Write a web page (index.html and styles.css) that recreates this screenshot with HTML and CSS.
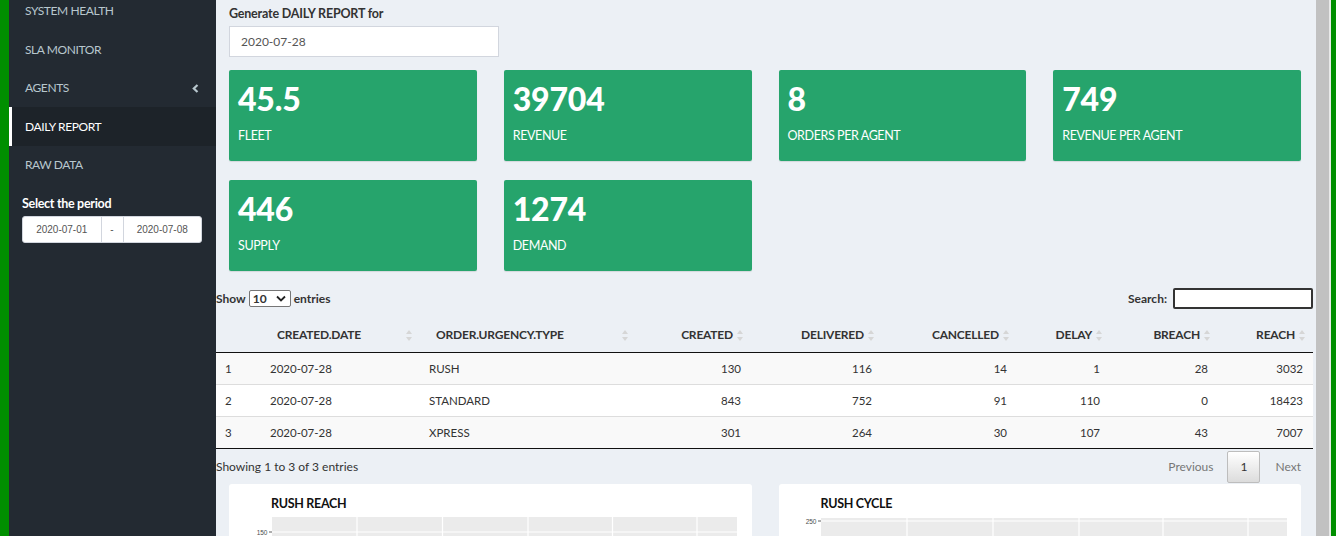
FILE: index.html
```html
<!DOCTYPE html>
<html>
<head>
<meta charset="utf-8">
<link rel="stylesheet" href="styles.css">
</head>
<body>
<div class="frame">
  <div class="edge-left"></div>
  <aside class="sidebar">
    <ul class="menu">
      <li class="item">SYSTEM HEALTH</li>
      <li class="item">SLA MONITOR</li>
      <li class="item has-sub">AGENTS
        <svg class="chev" width="7" height="9" viewBox="0 0 7 9"><polyline points="5.5,1 1.8,4.5 5.5,8" fill="none" stroke="#b8c7ce" stroke-width="2.2"/></svg>
      </li>
      <li class="item active">DAILY REPORT</li>
      <li class="item">RAW DATA</li>
    </ul>
    <div class="period">
      <div class="period-label">Select the period</div>
      <div class="range">
        <span class="range-date">2020-07-01</span>
        <span class="range-sep">-</span>
        <span class="range-date">2020-07-08</span>
      </div>
    </div>
  </aside>
  <main class="content">
    <div class="gen">
      <div class="gen-label">Generate DAILY REPORT for</div>
      <div class="gen-input">2020-07-28</div>
    </div>
    <div class="boxes">
      <div class="vbox"><div class="vnum">45.5</div><div class="vlab">FLEET</div></div>
      <div class="vbox"><div class="vnum">39704</div><div class="vlab">REVENUE</div></div>
      <div class="vbox"><div class="vnum">8</div><div class="vlab">ORDERS PER AGENT</div></div>
      <div class="vbox"><div class="vnum">749</div><div class="vlab">REVENUE PER AGENT</div></div>
      <div class="vbox"><div class="vnum">446</div><div class="vlab">SUPPLY</div></div>
      <div class="vbox"><div class="vnum">1274</div><div class="vlab">DEMAND</div></div>
    </div>
    <div class="dt">
      <div class="dt-top">
        <div class="dt-length">Show <span class="dt-select">10<svg width="10" height="7" viewBox="0 0 10 7"><polyline points="1,1.5 5,5.5 9,1.5" fill="none" stroke="#222" stroke-width="1.8"/></svg></span> entries</div>
        <div class="dt-search">Search: <span class="dt-search-input"></span></div>
      </div>
      <table class="dt-table">
        <colgroup>
          <col style="width:44px"><col style="width:159px"><col style="width:216px"><col style="width:116px"><col style="width:131px"><col style="width:135px"><col style="width:93px"><col style="width:108px"><col style="width:95px">
        </colgroup>
        <thead>
          <tr>
            <th class="idx"></th>
            <th class="sort">CREATED.DATE<span class="si"></span></th>
            <th class="sort">ORDER.URGENCY.TYPE<span class="si"></span></th>
            <th class="sort num">CREATED<span class="si"></span></th>
            <th class="sort num">DELIVERED<span class="si"></span></th>
            <th class="sort num">CANCELLED<span class="si"></span></th>
            <th class="sort num">DELAY<span class="si"></span></th>
            <th class="sort num">BREACH<span class="si"></span></th>
            <th class="sort num">REACH<span class="si"></span></th>
          </tr>
        </thead>
        <tbody>
          <tr class="odd"><td>1</td><td>2020-07-28</td><td>RUSH</td><td class="num">130</td><td class="num">116</td><td class="num">14</td><td class="num">1</td><td class="num">28</td><td class="num">3032</td></tr>
          <tr><td>2</td><td>2020-07-28</td><td>STANDARD</td><td class="num">843</td><td class="num">752</td><td class="num">91</td><td class="num">110</td><td class="num">0</td><td class="num">18423</td></tr>
          <tr class="odd"><td>3</td><td>2020-07-28</td><td>XPRESS</td><td class="num">301</td><td class="num">264</td><td class="num">30</td><td class="num">107</td><td class="num">43</td><td class="num">7007</td></tr>
        </tbody>
      </table>
      <div class="dt-bottom">
        <div class="dt-info">Showing 1 to 3 of 3 entries</div>
        <div class="dt-pages">
          <span class="pg-link">Previous</span>
          <span class="pg-btn">1</span>
          <span class="pg-link">Next</span>
        </div>
      </div>
    </div>
    <div class="charts">
      <div class="cbox">
        <div class="ctitle">RUSH REACH</div>
        <svg class="plot" width="522" height="30" viewBox="0 0 522 30">
          <rect x="43" y="0" width="465" height="30" fill="#ebebeb"/>
          <g stroke="#ffffff" stroke-width="1.2">
            <line x1="128" y1="0" x2="128" y2="30"/>
            <line x1="213.5" y1="0" x2="213.5" y2="30"/>
            <line x1="299" y1="0" x2="299" y2="30"/>
            <line x1="383.5" y1="0" x2="383.5" y2="30"/>
            <line x1="468" y1="0" x2="468" y2="30"/>
            <line x1="43" y1="15" x2="508" y2="15"/>
          </g>
          <line x1="40" y1="15" x2="43" y2="15" stroke="#333" stroke-width="0.8"/>
          <text x="38.5" y="17.5" text-anchor="end" class="axis">150</text>
        </svg>
      </div>
      <div class="cbox">
        <div class="ctitle">RUSH CYCLE</div>
        <svg class="plot" width="522" height="30" viewBox="0 0 522 30">
          <rect x="42" y="1" width="466" height="29" fill="#ebebeb"/>
          <g stroke="#ffffff" stroke-width="1.2">
            <line x1="128" y1="1" x2="128" y2="30"/>
            <line x1="214" y1="1" x2="214" y2="30"/>
            <line x1="300" y1="1" x2="300" y2="30"/>
            <line x1="384" y1="1" x2="384" y2="30"/>
            <line x1="469" y1="1" x2="469" y2="30"/>
            <line x1="42" y1="4" x2="508" y2="4"/>
          </g>
          <line x1="39" y1="4" x2="42" y2="4" stroke="#333" stroke-width="0.8"/>
          <text x="37.5" y="6.5" text-anchor="end" class="axis">250</text>
        </svg>
      </div>
    </div>
  </main>
  <div class="scrollbar"></div>
  <div class="edge-gap"></div>
  <div class="edge-right"></div>
</div>
</body>
</html>
```
FILE: styles.css
```css
* { box-sizing: border-box; }
html, body { margin: 0; padding: 0; }
body {
  font-family: Lato, "Noto Sans", sans-serif;
  color: #333;
  background: #ecf0f5;
  width: 1336px;
  height: 536px;
  overflow: hidden;
}
.frame {
  display: flex;
  width: 1336px;
  height: 536px;
  overflow: hidden;
}
.edge-left { width: 9px; flex: none; background: #008f00; }
.edge-right { width: 5px; flex: none; background: #008f00; }
.edge-gap { width: 2px; flex: none; background: #e8e8e8; }
.scrollbar { width: 13px; flex: none; background: #c1c1c1; }

/* sidebar */
.sidebar {
  width: 207px;
  flex: none;
  background: #232a32;
}
.menu {
  list-style: none;
  margin: -8.5px 0 0 0;
  padding: 0;
}
.item {
  height: 38.5px;
  display: flex;
  align-items: center;
  padding-left: 16px;
  font-size: 12px;
  color: #b8c7ce;
  letter-spacing: -0.4px;
  position: relative;
}
.item.active {
  background: #1d2329;
  color: #fff;
  border-left: 3px solid #fff;
  padding-left: 13px;
}
.chev { position: absolute; left: 183px; top: 15px; }
.period { padding: 12px 0 0 13px; }
.period-label {
  color: #fff;
  font-weight: bold;
  font-size: 12.5px;
  letter-spacing: -0.3px;
  line-height: 16px;
}
.range {
  margin-top: 4px;
  width: 180px;
  height: 27px;
  display: flex;
  background: #fff;
  border: 1px solid #d2d6de;
  border-radius: 3px;
  font-family: "Liberation Sans", Arial, sans-serif;
  font-size: 10px;
  color: #555;
}
.range-date { flex: 1; display: flex; align-items: center; justify-content: center; }
.range-sep {
  width: 23px;
  flex: none;
  display: flex;
  align-items: center;
  justify-content: center;
  border-left: 1px solid #d2d6de;
  border-right: 1px solid #d2d6de;
}

/* content */
.content {
  width: 1100px;
  flex: none;
  background: #ecf0f5;
  padding-top: 5px;
}
.gen { padding: 0 15px 0 13px; }
.gen-label {
  font-weight: bold;
  font-size: 12.5px;
  line-height: 17px;
  letter-spacing: -0.2px;
}
.gen-input {
  margin-top: 4px;
  width: 270px;
  height: 31px;
  background: #fff;
  border: 1px solid #d2d6de;
  padding: 0 11px;
  display: flex;
  align-items: center;
  font-size: 12px;
  color: #555;
}
.boxes {
  margin-top: 13px;
  padding: 0 15px 0 13px;
  display: grid;
  grid-template-columns: repeat(4, 1fr);
  column-gap: 27px;
  row-gap: 19px;
}
.vbox {
  height: 91px;
  background: #26a46c;
  border-radius: 2px;
  color: #fff;
  padding: 10px 9px 0 9px;
  box-shadow: 0 1px 1px rgba(0,0,0,0.1);
}
.vnum {
  font-size: 32px;
  font-weight: 900;
  line-height: 37px;
  letter-spacing: -0.2px;
}
.vlab {
  margin-top: 10px;
  font-size: 12.5px;
  line-height: 18px;
  letter-spacing: -0.4px;
}

/* datatable */
.dt { margin-top: 16px; width: 1097px; font-size: 12px; }
.dt-top {
  display: flex;
  justify-content: space-between;
  align-items: center;
  height: 22px;
}
.dt-length { display: flex; align-items: center; font-weight: bold; font-size: 12px; }
.dt-select {
  margin: 0 3px;
  width: 42px;
  height: 17px;
  border: 1px solid #767676;
  border-radius: 2px;
  background: #fff;
  display: inline-flex;
  align-items: center;
  justify-content: space-between;
  padding: 0 4px 0 3px;
  font-weight: bold;
  font-size: 12px;
}
.dt-search { display: flex; align-items: center; font-weight: bold; font-size: 12px; }
.dt-search-input {
  margin-left: 6px;
  width: 140px;
  height: 21px;
  background: #fff;
  border: 2px solid #333;
  border-radius: 2px;
}
.dt-table {
  margin-top: 9px;
  width: 1097px;
  table-layout: fixed;
  border-collapse: collapse;
  font-size: 11.5px;
}
.dt-table th {
  height: 34px;
  text-align: left;
  font-weight: bold;
  font-size: 12px;
  padding: 0 18px 0 17px;
  border-bottom: 1px solid #111;
  position: relative;
  white-space: nowrap;
  letter-spacing: -0.2px;
}
.dt-table th.num { text-align: right; }
.si {
  position: absolute;
  right: 6px;
  top: 12px;
  width: 7px;
  height: 11px;
}
.si::before, .si::after {
  content: "";
  position: absolute;
  left: 0;
  border-left: 3.5px solid transparent;
  border-right: 3.5px solid transparent;
}
.si::before { top: 0; border-bottom: 4.5px solid #d6d6d6; }
.si::after { bottom: 0; border-top: 4.5px solid #d6d6d6; }
.dt-table th.num .si { right: 7px; }
.dt-table td {
  height: 32px;
  padding: 0 10px;
  border-top: 1px solid #ddd;
  background: #fff;
  white-space: nowrap;
}
.dt-table td:first-child { padding-left: 9px; }
.dt-table tr.odd td { background: #f9f9f9; }
.dt-table tbody tr:first-child td { border-top: none; }
.dt-table tbody tr:last-child td { border-bottom: 1px solid #111; }
.dt-table td.num { text-align: right; }
.dt-bottom {
  display: flex;
  justify-content: space-between;
  align-items: center;
  height: 35px;
}
.dt-info { font-size: 12px; }
.dt-pages { display: flex; align-items: center; padding-right: 7px; }
.pg-link { color: #777; font-size: 12px; padding: 0 7px; }
.pg-link:first-child { padding-right: 14px; }
.pg-link:last-child { padding-left: 15px; padding-right: 5px; }
.pg-btn {
  width: 33px;
  height: 32px;
  margin-top: 1px;
  display: flex;
  align-items: center;
  justify-content: center;
  border: 1px solid #bdbdbd;
  border-radius: 2px;
  background: linear-gradient(#ffffff, #dcdcdc);
  font-size: 12px;
  color: #333;
}

/* charts */
.charts {
  padding: 0 15px 0 13px;
  display: grid;
  grid-template-columns: 1fr 1fr;
  column-gap: 27px;
}
.cbox {
  background: #fff;
  border-radius: 3px;
  height: 80px;
  padding-top: 12px;
}
.ctitle {
  padding-left: 42px;
  font-weight: bold;
  font-size: 12.5px;
  line-height: 16px;
  color: #111;
  letter-spacing: -0.3px;
}
.plot { display: block; margin-top: 5px; }
.axis { font-family: "Liberation Sans", Arial, sans-serif; font-size: 6.5px; fill: #4d4d4d; }
```
